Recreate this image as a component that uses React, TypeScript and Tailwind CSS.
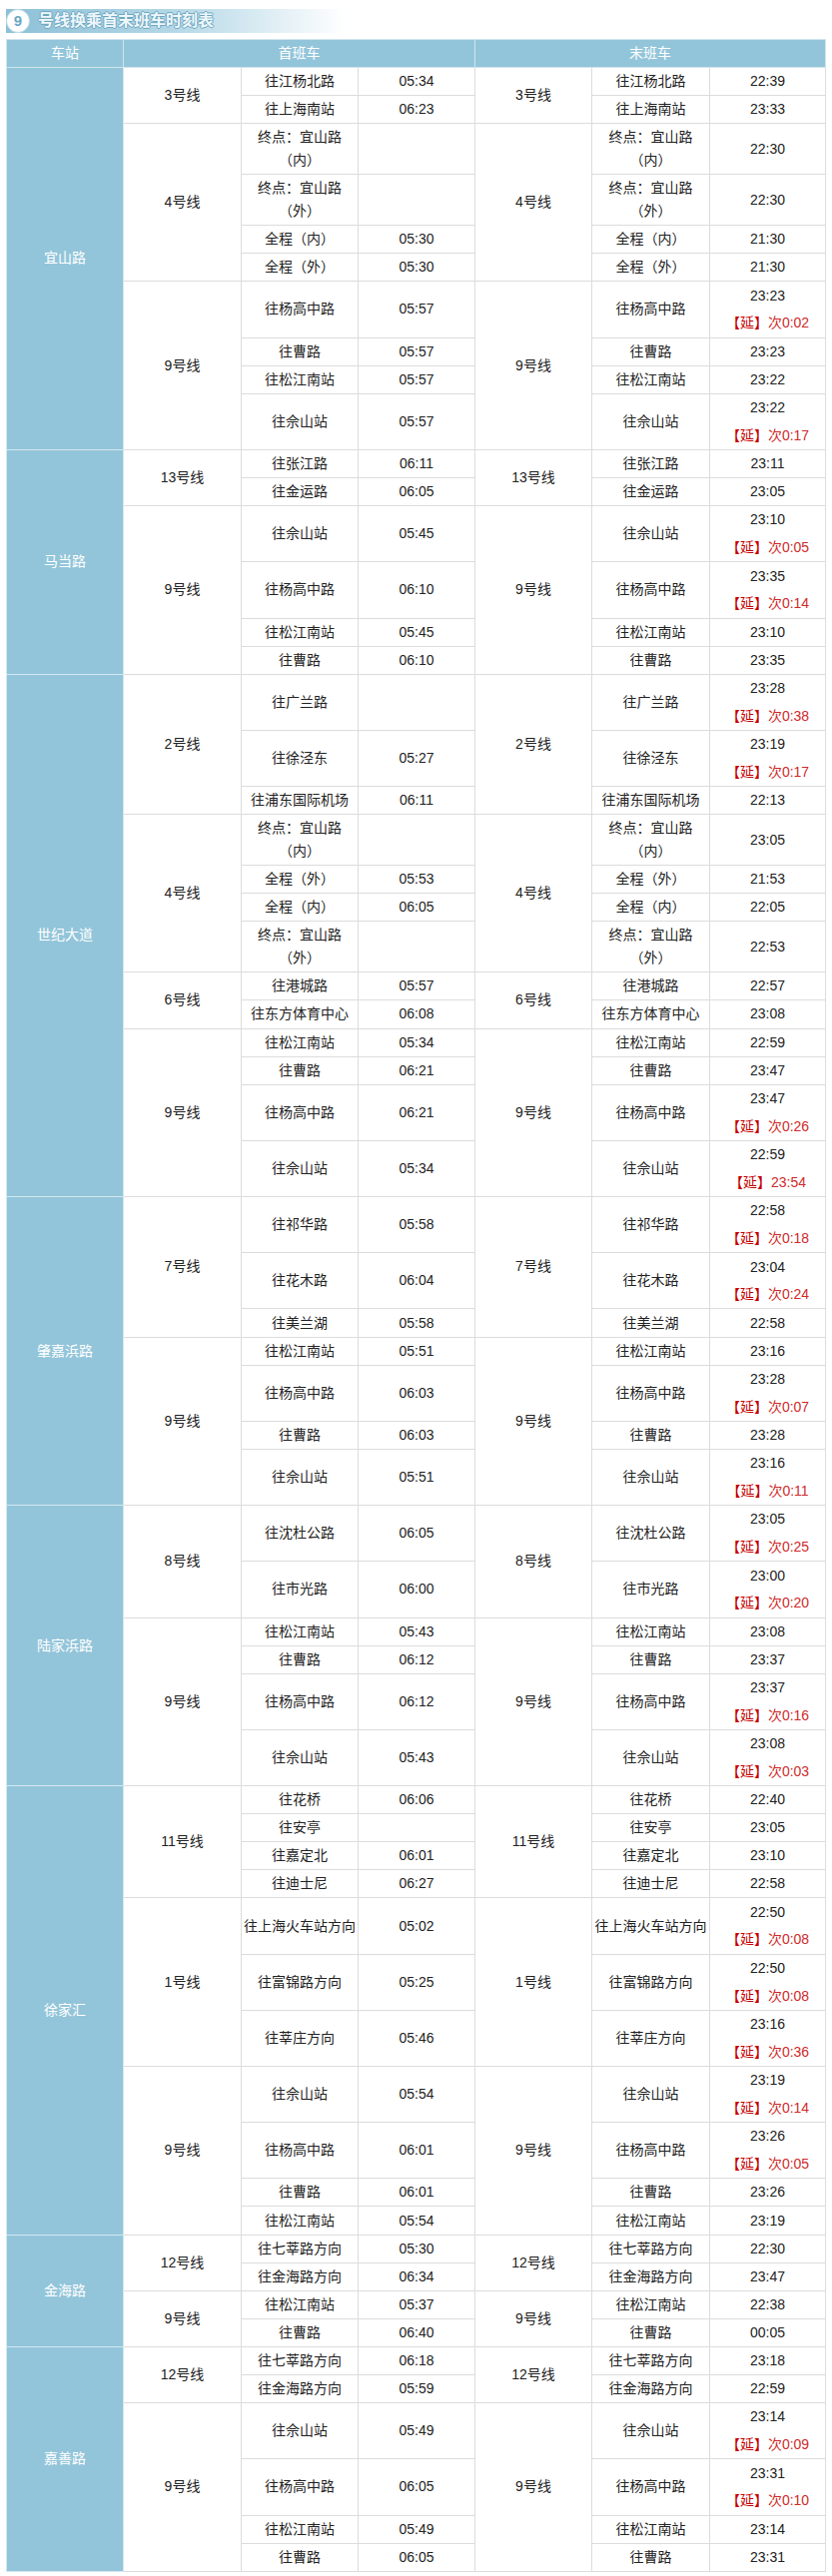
import React from "react";

type Row = { d: string[]; f: string; l: string; x?: string };
type Line = { name: string; rows: Row[] };
type Station = { name: string; lines: Line[] };

const r = (d: string | string[], f: string, l: string, x?: string): Row => ({
  d: Array.isArray(d) ? d : [d],
  f,
  l,
  x,
});

const stations: Station[] = [
  {
    name: "宜山路",
    lines: [
      { name: "3号线", rows: [r("往江杨北路", "05:34", "22:39"), r("往上海南站", "06:23", "23:33")] },
      {
        name: "4号线",
        rows: [
          r(["终点：宜山路", "（内）"], "", "22:30"),
          r(["终点：宜山路", "（外）"], "", "22:30"),
          r("全程（内）", "05:30", "21:30"),
          r("全程（外）", "05:30", "21:30"),
        ],
      },
      {
        name: "9号线",
        rows: [
          r("往杨高中路", "05:57", "23:23", "次0:02"),
          r("往曹路", "05:57", "23:23"),
          r("往松江南站", "05:57", "23:22"),
          r("往佘山站", "05:57", "23:22", "次0:17"),
        ],
      },
    ],
  },
  {
    name: "马当路",
    lines: [
      { name: "13号线", rows: [r("往张江路", "06:11", "23:11"), r("往金运路", "06:05", "23:05")] },
      {
        name: "9号线",
        rows: [
          r("往佘山站", "05:45", "23:10", "次0:05"),
          r("往杨高中路", "06:10", "23:35", "次0:14"),
          r("往松江南站", "05:45", "23:10"),
          r("往曹路", "06:10", "23:35"),
        ],
      },
    ],
  },
  {
    name: "世纪大道",
    lines: [
      {
        name: "2号线",
        rows: [
          r("往广兰路", "", "23:28", "次0:38"),
          r("往徐泾东", "05:27", "23:19", "次0:17"),
          r("往浦东国际机场", "06:11", "22:13"),
        ],
      },
      {
        name: "4号线",
        rows: [
          r(["终点：宜山路", "（内）"], "", "23:05"),
          r("全程（外）", "05:53", "21:53"),
          r("全程（内）", "06:05", "22:05"),
          r(["终点：宜山路", "（外）"], "", "22:53"),
        ],
      },
      { name: "6号线", rows: [r("往港城路", "05:57", "22:57"), r("往东方体育中心", "06:08", "23:08")] },
      {
        name: "9号线",
        rows: [
          r("往松江南站", "05:34", "22:59"),
          r("往曹路", "06:21", "23:47"),
          r("往杨高中路", "06:21", "23:47", "次0:26"),
          r("往佘山站", "05:34", "22:59", "23:54"),
        ],
      },
    ],
  },
  {
    name: "肇嘉浜路",
    lines: [
      {
        name: "7号线",
        rows: [
          r("往祁华路", "05:58", "22:58", "次0:18"),
          r("往花木路", "06:04", "23:04", "次0:24"),
          r("往美兰湖", "05:58", "22:58"),
        ],
      },
      {
        name: "9号线",
        rows: [
          r("往松江南站", "05:51", "23:16"),
          r("往杨高中路", "06:03", "23:28", "次0:07"),
          r("往曹路", "06:03", "23:28"),
          r("往佘山站", "05:51", "23:16", "次0:11"),
        ],
      },
    ],
  },
  {
    name: "陆家浜路",
    lines: [
      {
        name: "8号线",
        rows: [r("往沈杜公路", "06:05", "23:05", "次0:25"), r("往市光路", "06:00", "23:00", "次0:20")],
      },
      {
        name: "9号线",
        rows: [
          r("往松江南站", "05:43", "23:08"),
          r("往曹路", "06:12", "23:37"),
          r("往杨高中路", "06:12", "23:37", "次0:16"),
          r("往佘山站", "05:43", "23:08", "次0:03"),
        ],
      },
    ],
  },
  {
    name: "徐家汇",
    lines: [
      {
        name: "11号线",
        rows: [
          r("往花桥", "06:06", "22:40"),
          r("往安亭", "", "23:05"),
          r("往嘉定北", "06:01", "23:10"),
          r("往迪士尼", "06:27", "22:58"),
        ],
      },
      {
        name: "1号线",
        rows: [
          r("往上海火车站方向", "05:02", "22:50", "次0:08"),
          r("往富锦路方向", "05:25", "22:50", "次0:08"),
          r("往莘庄方向", "05:46", "23:16", "次0:36"),
        ],
      },
      {
        name: "9号线",
        rows: [
          r("往佘山站", "05:54", "23:19", "次0:14"),
          r("往杨高中路", "06:01", "23:26", "次0:05"),
          r("往曹路", "06:01", "23:26"),
          r("往松江南站", "05:54", "23:19"),
        ],
      },
    ],
  },
  {
    name: "金海路",
    lines: [
      { name: "12号线", rows: [r("往七莘路方向", "05:30", "22:30"), r("往金海路方向", "06:34", "23:47")] },
      { name: "9号线", rows: [r("往松江南站", "05:37", "22:38"), r("往曹路", "06:40", "00:05")] },
    ],
  },
  {
    name: "嘉善路",
    lines: [
      { name: "12号线", rows: [r("往七莘路方向", "06:18", "23:18"), r("往金海路方向", "05:59", "22:59")] },
      {
        name: "9号线",
        rows: [
          r("往佘山站", "05:49", "23:14", "次0:09"),
          r("往杨高中路", "06:05", "23:31", "次0:10"),
          r("往松江南站", "05:49", "23:14"),
          r("往曹路", "06:05", "23:31"),
        ],
      },
    ],
  },
];

// row height by kind: single / wrapped / with 延 note
const rowH = (row: Row) => (row.x ? "h-[55.2px]" : row.d.length > 1 ? "h-[50px]" : "h-[27.1px]");

const td = "border border-[#dcdcdc] p-0 text-center align-middle";

const Dest = ({ row }: { row: Row }) => (
  <div className={`${rowH(row)} flex flex-col items-center justify-center whitespace-nowrap leading-[23px]`}>
    {row.d.map((t) => (
      <span key={t}>{t}</span>
    ))}
  </div>
);

const LastTime = ({ row }: { row: Row }) =>
  row.x ? (
    <div className={`${rowH(row)} flex flex-col`}>
      <div className="flex flex-1 items-center justify-center">{row.l}</div>
      <div className="flex flex-1 items-center justify-center whitespace-nowrap">
        <span className="text-[#c40000]">【延】</span>
        <span className="text-[#d02a2a]">{row.x}</span>
      </div>
    </div>
  ) : (
    <div className={`${rowH(row)} flex items-center justify-center`}>{row.l}</div>
  );

export default function App() {
  return (
    <div className="w-[833px] bg-white pt-[9px] pl-[6px] font-['Liberation_Sans','Noto_Sans_CJK_SC',sans-serif] text-[14px] text-[#222]">
      {/* 标题 */}
      <div className="flex h-[24px] w-[340px] items-center bg-linear-to-r from-[#8cc0d6] via-[#b5d8e7] to-white">
        <div className="flex h-[24px] w-[24px] items-center justify-center rounded-full border border-[#bcd9e6] bg-white text-[15px] font-bold text-[#6aa8c4]">
          9
        </div>
        <span className="ml-[8px] text-[16px] font-bold text-[#eef7fb] [text-shadow:1px_0_0_#6ea7c1,-1px_0_0_#6ea7c1,0_1px_0_#6ea7c1,0_-1px_0_#6ea7c1]">
          号线换乘首末班车时刻表
        </span>
      </div>

      <table className="mt-[6px] w-[820px] table-fixed border-collapse">
        <colgroup>
          <col className="w-[117px]" />
          <col className="w-[118px]" />
          <col className="w-[117px]" />
          <col className="w-[117px]" />
          <col className="w-[117px]" />
          <col className="w-[118px]" />
          <col className="w-[116px]" />
        </colgroup>
        <thead>
          <tr>
            <th className="border border-[#cfe5ee] bg-[#93c5da] p-0 font-normal text-white">
              <div className="flex h-[27px] items-center justify-center">车站</div>
            </th>
            <th colSpan={3} className="border border-[#cfe5ee] bg-[#93c5da] p-0 font-normal text-white">
              <div className="flex h-[27px] items-center justify-center">首班车</div>
            </th>
            <th colSpan={3} className="border border-[#cfe5ee] bg-[#93c5da] p-0 font-normal text-white">
              <div className="flex h-[27px] items-center justify-center">末班车</div>
            </th>
          </tr>
        </thead>
        <tbody>
          {stations.map((st) => {
            const total = st.lines.reduce((n, ln) => n + ln.rows.length, 0);
            return st.lines.map((ln, li) =>
              ln.rows.map((row, ri) => (
                <tr key={`${st.name}-${ln.name}-${ri}`}>
                  {li === 0 && ri === 0 && (
                    <td
                      rowSpan={total}
                      className="border border-[#d3e8f0] bg-[#93c5da] p-0 text-center align-middle text-white"
                    >
                      {st.name}
                    </td>
                  )}
                  {ri === 0 && (
                    <td rowSpan={ln.rows.length} className={td}>
                      {ln.name}
                    </td>
                  )}
                  <td className={td}>
                    <Dest row={row} />
                  </td>
                  <td className={td}>{row.f}</td>
                  {ri === 0 && (
                    <td rowSpan={ln.rows.length} className={td}>
                      {ln.name}
                    </td>
                  )}
                  <td className={td}>
                    <Dest row={row} />
                  </td>
                  <td className={td}>
                    <LastTime row={row} />
                  </td>
                </tr>
              ))
            );
          })}
        </tbody>
      </table>
    </div>
  );
}
